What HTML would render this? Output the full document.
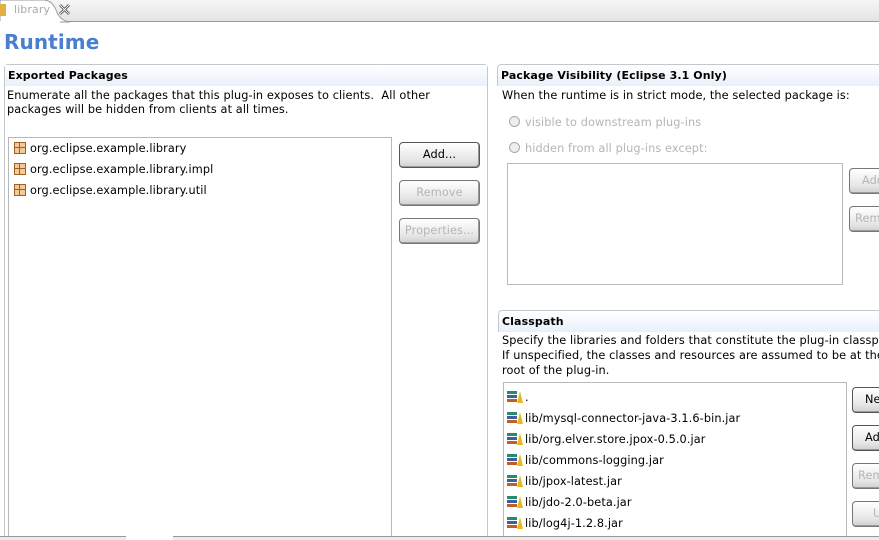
<!DOCTYPE html>
<html><head><style>
*{margin:0;padding:0;box-sizing:border-box}
html,body{width:879px;height:540px;overflow:hidden}
body{background:#fff;font-family:"DejaVu Sans","Liberation Sans",sans-serif;font-size:11.3px;letter-spacing:0.1px;color:#000;position:relative}
.a{position:absolute;white-space:nowrap}
.sec{position:absolute;border:1px solid #c3c8ce;border-bottom:none;border-radius:4px 4px 0 0}
.hd{height:21px;background:linear-gradient(#fff,#e8f0fb);font-weight:bold;padding:4px 0 0 3px;font-size:11px}
.box{position:absolute;border:1px solid #b8b8b8;background:#fff}
.btn{position:absolute;height:26px;border:1px solid #555;border-radius:4px;background:linear-gradient(#fff,#e6e6e6 70%,#cfcfcf);text-align:center;line-height:24px;box-shadow:inset -1px -1px 0 #999}
.dis{color:#b5b5b5;border-color:#777}
.pk{display:inline-block;width:12px;height:12px;border:1px solid #a0602a;background:#f5c995;vertical-align:-2px;margin-right:4px;background-image:linear-gradient(90deg,transparent 4px,#a0602a 4px,#a0602a 5px,transparent 5px),linear-gradient(transparent 4px,#a0602a 4px,#a0602a 5px,transparent 5px)}
.jar{display:inline-block;width:16px;height:12px;vertical-align:-2px;margin-right:2px;position:relative}
.jar i{position:absolute;left:0;width:10px;height:3px}
.jar b{position:absolute;left:10px;top:0;width:0;height:0;border-left:3px solid transparent;border-right:3px solid transparent;border-bottom:12px solid #e8b820}
.radio{display:inline-block;width:11px;height:11px;border:1px solid #aaa;border-radius:50%;vertical-align:-1px;margin-right:5px;background:#eee}
</style></head><body>
<div class="a" style="left:0;top:0;width:879px;height:22px;background:linear-gradient(#f6f6f6,#e4e4e4);border-bottom:1px solid #999"></div>
<svg class="a" style="left:0;top:0" width="80" height="23"><path d="M0 0H43Q52 0 56 10Q60 21 70 22H0Z" fill="#fff" stroke="#999"/><rect x="0" y="21" width="60" height="3" fill="#fff"/></svg>
<div class="a" style="left:0;top:4px;width:6px;height:12px;background:#e0b040"></div>
<div class="a" style="left:14px;top:3px;color:#aaa;font-size:11px">library</div>
<svg class="a" style="left:59px;top:4px" width="11" height="11"><path d="M1 1L10 10M10 1L1 10" stroke="#333" stroke-width="2.5"/><path d="M1 1L10 10M10 1L1 10" stroke="#fff" stroke-width="1"/></svg>
<div class="a" style="left:4px;top:30px;font-size:20px;font-weight:bold;color:#4a7fcf">Runtime</div>

<div class="sec" style="left:4px;top:64px;width:484px;height:480px"><div class="hd">Exported Packages</div></div>
<div class="a" style="left:7px;top:89px">Enumerate all the packages that this plug-in exposes to clients.&nbsp; All other</div>
<div class="a" style="left:7px;top:103px">packages will be hidden from clients at all times.</div>
<div class="box" style="left:8px;top:137px;width:384px;height:410px"></div>
<div class="a" style="left:14px;top:142px"><span class="pk"></span>org.eclipse.example.library</div>
<div class="a" style="left:14px;top:163px"><span class="pk"></span>org.eclipse.example.library.impl</div>
<div class="a" style="left:14px;top:184px"><span class="pk"></span>org.eclipse.example.library.util</div>
<div class="btn" style="left:399px;top:142px;width:81px">Add...</div>
<div class="btn dis" style="left:399px;top:180px;width:81px">Remove</div>
<div class="btn dis" style="left:399px;top:218px;width:81px">Properties...</div>

<div class="sec" style="left:497px;top:64px;width:400px;height:230px;border-left:none"><div class="hd" style="border-left:1px solid #c3c8ce;border-radius:4px 0 0 0">Package Visibility (Eclipse 3.1 Only)</div></div>
<div class="a" style="left:502px;top:89px">When the runtime is in strict mode, the selected package is:</div>
<div class="a" style="left:509px;top:116px;color:#b5b5b5"><span class="radio"></span>visible to downstream plug-ins</div>
<div class="a" style="left:509px;top:142px;color:#b5b5b5"><span class="radio"></span>hidden from all plug-ins except:</div>
<div class="box" style="left:507px;top:163px;width:336px;height:122px"></div>
<div class="btn dis" style="left:849px;top:168px;width:60px;text-align:left;padding-left:12px">Add</div>
<div class="btn dis" style="left:849px;top:206px;width:60px;text-align:left;padding-left:5px">Remove</div>

<div class="sec" style="left:498px;top:310px;width:400px;height:240px;border-left:none"><div class="hd" style="border-left:1px solid #c3c8ce;border-radius:4px 0 0 0">Classpath</div></div>
<div class="a" style="left:502px;top:334px">Specify the libraries and folders that constitute the plug-in classpath.</div>
<div class="a" style="left:502px;top:349px">If unspecified, the classes and resources are assumed to be at the</div>
<div class="a" style="left:502px;top:364px">root of the plug-in.</div>
<div class="box" style="left:503px;top:382px;width:344px;height:170px"></div>
<div class="a" style="left:507px;top:387px;line-height:21px">
<div><span class="jar"><i style="top:0;background:#2a8a70"></i><i style="top:4px;background:#3a60a0"></i><i style="top:8px;background:#c06020"></i><b></b></span>.</div>
<div><span class="jar"><i style="top:0;background:#2a8a70"></i><i style="top:4px;background:#3a60a0"></i><i style="top:8px;background:#c06020"></i><b></b></span>lib/mysql-connector-java-3.1.6-bin.jar</div>
<div><span class="jar"><i style="top:0;background:#2a8a70"></i><i style="top:4px;background:#3a60a0"></i><i style="top:8px;background:#c06020"></i><b></b></span>lib/org.elver.store.jpox-0.5.0.jar</div>
<div><span class="jar"><i style="top:0;background:#2a8a70"></i><i style="top:4px;background:#3a60a0"></i><i style="top:8px;background:#c06020"></i><b></b></span>lib/commons-logging.jar</div>
<div><span class="jar"><i style="top:0;background:#2a8a70"></i><i style="top:4px;background:#3a60a0"></i><i style="top:8px;background:#c06020"></i><b></b></span>lib/jpox-latest.jar</div>
<div><span class="jar"><i style="top:0;background:#2a8a70"></i><i style="top:4px;background:#3a60a0"></i><i style="top:8px;background:#c06020"></i><b></b></span>lib/jdo-2.0-beta.jar</div>
<div><span class="jar"><i style="top:0;background:#2a8a70"></i><i style="top:4px;background:#3a60a0"></i><i style="top:8px;background:#c06020"></i><b></b></span>lib/log4j-1.2.8.jar</div>
</div>
<div class="btn" style="left:852px;top:387px;width:60px;text-align:left;padding-left:12px">New</div>
<div class="btn" style="left:852px;top:425px;width:60px;text-align:left;padding-left:12px">Add</div>
<div class="btn dis" style="left:852px;top:463px;width:60px;text-align:left;padding-left:5px">Remove</div>
<div class="btn dis" style="left:852px;top:501px;width:60px;text-align:left;padding-left:20px">Up</div>

<div class="a" style="left:0;top:536px;width:879px;height:4px;background:#ececec;border-top:1px solid #999"></div>
<div class="a" style="left:126px;top:536px;width:47px;height:4px;background:#fff"></div>
</body></html>
